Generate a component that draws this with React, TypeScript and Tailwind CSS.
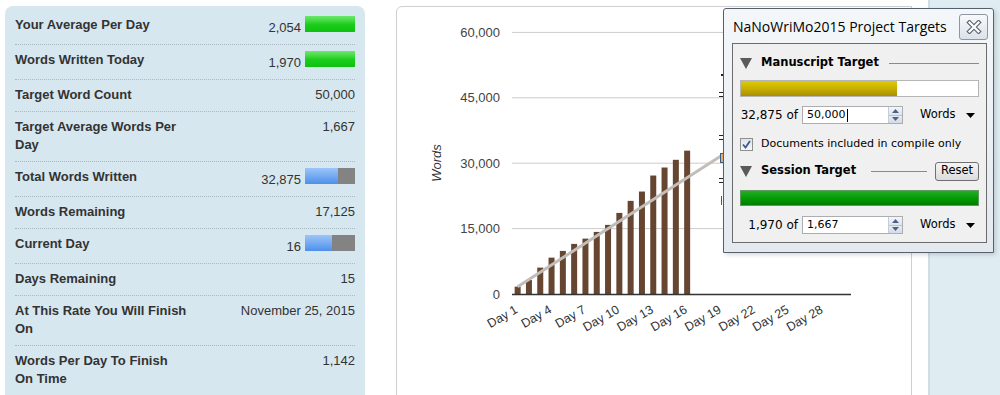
import React from 'react';

type Row = {
  label: string[];
  value: string;
  bar?: 'green' | number;
};

const rows: Row[] = [
  { label: ['Your Average Per Day'], value: '2,054', bar: 'green' },
  { label: ['Words Written Today'], value: '1,970', bar: 'green' },
  { label: ['Target Word Count'], value: '50,000' },
  { label: ['Target Average Words Per', 'Day'], value: '1,667' },
  { label: ['Total Words Written'], value: '32,875', bar: 33 },
  { label: ['Words Remaining'], value: '17,125' },
  { label: ['Current Day'], value: '16', bar: 27 },
  { label: ['Days Remaining'], value: '15' },
  { label: ['At This Rate You Will Finish', 'On'], value: 'November 25, 2015' },
  { label: ['Words Per Day To Finish', 'On Time'], value: '1,142' },
];

const written = [1680, 3200, 6050, 8340, 9880, 11490, 12700, 14240, 15850, 18600, 21360, 23500, 27170, 29010, 30780, 32875];

const dayX = (d: number) => 512 + (d - 0.5) * 11.3;
const yOf = (v: number) => 294 - (v * 65.4) / 15000;

function StatBar({ bar }: { bar: 'green' | number }) {
  if (bar === 'green') {
    return <span className="ml-[4px] inline-block h-4 w-[50px] bg-linear-to-b from-[#6ae86a] via-[#1ccf1c] to-[#10c010] align-baseline" />;
  }
  return (
    <span className="ml-[4px] inline-block h-4 w-[50px] bg-[#838383] align-baseline">
      <span className="block h-4 bg-linear-to-b from-[#9cc5f8] to-[#4c90ea]" style={{ width: bar }} />
    </span>
  );
}

function StatsPanel() {
  return (
    <div className="ml-[5px] mt-[6px] w-[360px] shrink-0 rounded-t-[8px] bg-[#d6e7ef] px-[10px] pt-[4px] font-['Liberation_Sans',Arial,sans-serif] text-[13px] leading-[18px] text-[#333]">
      {rows.map((r, i) => (
        <div
          key={r.label[0]}
          className={`flex items-start justify-between pt-[6px] pb-[7px] ${i < rows.length - 1 ? 'border-b border-dotted border-[#a9b9c1]' : ''}`}
        >
          <div className="font-bold">
            {r.label.map((l) => (
              <div key={l}>{l}</div>
            ))}
          </div>
          <div className="text-right">
            {r.value}
            {r.bar !== undefined && <StatBar bar={r.bar} />}
          </div>
        </div>
      ))}
    </div>
  );
}

function Chart() {
  const grid = [60000, 45000, 30000, 15000];
  const labels = [1, 4, 7, 10, 13, 16, 19, 22, 25, 28];
  return (
    <div className="ml-[31px] mt-[6px] h-[400px] w-[516px] shrink-0 rounded-tl-[6px] border border-[#cfcfcf] bg-white">
      <svg width="514" height="400" className="block" fontFamily="'Liberation Sans', Arial, sans-serif">
        <g transform="translate(-397 -7)">
          {grid.map((v) => (
            <g key={v}>
              <line x1="512" x2="851" y1={yOf(v)} y2={yOf(v)} stroke="#cccccc" strokeWidth="1" />
              <text x="500" y={yOf(v) + 4.5} textAnchor="end" fontSize="13" fill="#444">
                {v.toLocaleString('en-US')}
              </text>
            </g>
          ))}
          <text x="500" y={294 + 4.5} textAnchor="end" fontSize="13" fill="#444">
            0
          </text>
          <text x="441" y="163" textAnchor="middle" fontSize="13" fontStyle="italic" fill="#333" transform="rotate(-90 441 163)">
            Words
          </text>
          {written.map((v, i) => (
            <rect key={i} x={dayX(i + 1) - 3} y={yOf(v)} width="6" height={294 - yOf(v)} fill="#664630" />
          ))}
          <line x1={dayX(1)} y1={yOf(1667)} x2={dayX(30)} y2={yOf(50000)} stroke="#c2bdb8" strokeWidth="3" />
          <line x1="512" x2="851" y1="294.5" y2="294.5" stroke="#333" strokeWidth="1.5" />
          {labels.map((d) => {
            const x = dayX(d) + 1;
            return (
              <text key={d} x={x} y="312" textAnchor="end" fontSize="12.5" fill="#333" transform={`rotate(-30 ${x} 312)`}>
                Day {d}
              </text>
            );
          })}
          <rect x="721" y="74" width="2" height="2" fill="#222" />
          <line x1="719" x2="723" y1="92.5" y2="92.5" stroke="#222" />
          <line x1="719" x2="723" y1="96.5" y2="96.5" stroke="#222" />
          <line x1="719" x2="723" y1="135.5" y2="135.5" stroke="#222" />
          <line x1="719" x2="723" y1="139.5" y2="139.5" stroke="#222" />
          <rect x="720.5" y="153.5" width="3" height="9" fill="#e7b25a" stroke="#3a5a88" />
          <line x1="719" x2="723" y1="178.5" y2="178.5" stroke="#222" />
          <line x1="719" x2="723" y1="182.5" y2="182.5" stroke="#222" />
          <line x1="721.5" x2="721.5" y1="196" y2="205" stroke="#3a5a88" />
        </g>
      </svg>
    </div>
  );
}

function Triangle() {
  return (
    <svg width="12" height="11" viewBox="0 0 12 11" className="shrink-0">
      <path d="M0 0 H12 L6 11 Z" fill="#5a5a5a" />
    </svg>
  );
}

function SpinInput({ value, caret }: { value: string; caret?: boolean }) {
  return (
    <div className="ml-[4px] flex h-[18px] w-[101px] border border-[#abadb3] bg-white">
      <div className="flex flex-1 items-center pl-[4px]">
        {value}
        {caret && <span className="ml-px inline-block h-[13px] w-px bg-black" />}
      </div>
      <div className="flex w-[14px] flex-col border-l border-[#c5cdd8]">
        <div className="flex flex-1 items-center justify-center border-b border-[#b7c2cf] bg-linear-to-b from-[#f3f6fa] to-[#dde5ee]">
          <svg width="7" height="4" viewBox="0 0 7 4">
            <path d="M0 4 L3.5 0 L7 4 Z" fill="#4d6185" />
          </svg>
        </div>
        <div className="flex flex-1 items-center justify-center bg-linear-to-b from-[#e6ecf3] to-[#d3dce7]">
          <svg width="7" height="4" viewBox="0 0 7 4">
            <path d="M0 0 L7 0 L3.5 4 Z" fill="#4d6185" />
          </svg>
        </div>
      </div>
    </div>
  );
}

function UnitSelect() {
  return (
    <div className="ml-[17px] flex items-center text-[11.5px]">
      <span>Words</span>
      <svg width="9" height="5" viewBox="0 0 9 5" className="ml-[10px]">
        <path d="M0 0 H9 L4.5 5 Z" fill="#000" />
      </svg>
    </div>
  );
}

function TargetsPopup() {
  return (
    <div className="absolute left-[723px] top-[8px] flex h-[245px] w-[271px] flex-col rounded-t-[3px] border border-[#56606c] bg-linear-to-b from-[#f4f7fa] to-[#e3e9ef] shadow-[2px_2px_4px_rgba(0,0,0,0.15)]">
      <div className="flex h-[34px] items-center justify-between pl-[9px] pr-[5px]">
        <span className="font-['Open_Sans','Noto_Sans',sans-serif] text-[14px] text-black">NaNoWriMo2015 Project Targets</span>
        <div className="mt-[1px] flex h-[26px] w-[29px] items-center justify-center rounded-[3px] border border-[#8d97a3] bg-linear-to-b from-[#f7f9fb] to-[#dce2e9]">
          <svg width="16" height="14" viewBox="0 0 16 14">
            <path d="M3.5 2.5 L12.5 11.5 M12.5 2.5 L3.5 11.5" stroke="#5d6671" strokeWidth="4.5" strokeLinecap="square" />
            <path d="M3.5 2.5 L12.5 11.5 M12.5 2.5 L3.5 11.5" stroke="#ffffff" strokeWidth="2.2" strokeLinecap="square" />
          </svg>
        </div>
      </div>
      <div className="ml-[8px] flex h-[200px] w-[255px] flex-col border border-[#6b6b6b] bg-[#f0f0f0] px-[7px] font-['DejaVu_Sans',Verdana,sans-serif] text-[11px] text-black">
        <div className="mt-[9px] flex h-[20px] items-center">
          <Triangle />
          <span className="ml-[9px] text-[11.5px] font-bold">Manuscript Target</span>
          <div className="ml-[10px] h-px flex-1 bg-[#8a8a8a]" />
        </div>
        <div className="mt-[7px] h-[17px] border border-[#b5b5b5] bg-white">
          <div className="h-full w-[66%] bg-linear-to-b from-[#dccb08] via-[#c8b000] to-[#a88f00]" />
        </div>
        <div className="mt-[9px] flex h-[18px] items-center">
          <span className="w-[58px] text-right text-[12px]">32,875 of</span>
          <SpinInput value="50,000" caret />
          <UnitSelect />
        </div>
        <div className="mt-[12px] flex h-[16px] items-center">
          <div className="flex h-[13px] w-[13px] items-center justify-center border border-[#8e8f8f] bg-linear-to-b from-[#dfe3ea] to-[#f6f7f9]">
            <svg width="9" height="9" viewBox="0 0 9 9">
              <path d="M1 4.5 L3.5 7.5 L8 1" stroke="#3d5896" strokeWidth="1.8" fill="none" />
            </svg>
          </div>
          <span className="ml-[8px]">Documents included in compile only</span>
        </div>
        <div className="mt-[9px] flex h-[20px] items-center">
          <Triangle />
          <span className="ml-[9px] text-[11.5px] font-bold">Session Target</span>
          <div className="ml-[15px] h-px flex-1 bg-[#8a8a8a]" />
          <div className="ml-[8px] flex h-[19px] w-[44px] items-center justify-center rounded-[3px] border border-[#707070] bg-linear-to-b from-[#f4f4f4] to-[#dcdcdc] text-[11.5px]">
            Reset
          </div>
        </div>
        <div className="mt-[9px] h-[16px] border border-[#5e9a5e] bg-linear-to-b from-[#22ad22] via-[#049c04] to-[#007d00]" />
        <div className="mt-[10px] flex h-[18px] items-center">
          <span className="w-[58px] text-right text-[12px]">1,970 of</span>
          <SpinInput value="1,667" />
          <UnitSelect />
        </div>
      </div>
    </div>
  );
}

export default function App() {
  return (
    <div className="relative flex h-[395px] w-[1000px] overflow-hidden bg-white">
      <StatsPanel />
      <Chart />
      <div className="ml-[16px] h-full w-[72px] shrink-0 border-l-2 border-[#cfdde4] bg-[#dfedf3]" />
      <TargetsPopup />
    </div>
  );
}
